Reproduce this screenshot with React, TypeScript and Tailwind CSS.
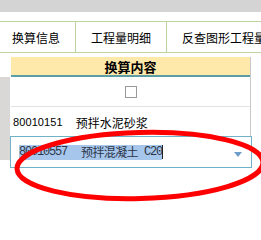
const CJK = "font-['Noto_Sans_CJK_SC',sans-serif]";

function Tab({ label, last }: { label: string; last?: boolean }) {
  return (
    <div
      className={`flex items-center px-[15px] pt-[2px] text-[12px] text-black whitespace-nowrap ${
        last ? "" : "border-r border-[#bcd5a0]"
      }`}
    >
      {label}
    </div>
  );
}

export default function App() {
  return (
    <div className={`relative w-[261px] h-[240px] overflow-hidden bg-white ${CJK}`}>
      {/* window chrome */}
      <div className="h-[12px] bg-[#d4d4d4]" />
      <div className="h-[9px]" />

      {/* tabs */}
      <div className="flex h-[32px] -ml-[3px] border-y border-[#bcd5a0]">
        <Tab label="换算信息" />
        <Tab label="工程量明细" />
        <Tab label="反查图形工程量" last />
      </div>
      <div className="h-[4px]" />

      {/* grid */}
      <div className="flex">
        <div className="w-[10px] flex flex-col">
          <div className="h-[20px]" />
          <div className="h-[83px] bg-[#d9d8d6]" />
        </div>
        <div className="w-[242px] flex flex-col">
          <div className="mx-px w-[240px] border-r border-[#c8c8c8]">
            <div className="h-[18px] bg-[#fee9ab] flex items-center justify-center text-[13px] font-bold text-black leading-none">
              换算内容
            </div>
            <div className="h-[2px] bg-[#5b9ea6]" />
            <div className="h-[30px] border-b border-[#e2e2e2] flex items-center justify-center">
              <div className="w-[12px] h-[12px] border border-[#9a9a9a] bg-white" />
            </div>
            <div className="h-[29px] flex items-center pl-[2px] pt-[2px] text-[12px] text-black">
              <span className="font-['Liberation_Sans',sans-serif] text-[11px] tracking-[0.1px]">80010151</span>
              <span className="ml-[13px]">预拌水泥砂浆</span>
            </div>
          </div>
          <div className="h-[32px] border border-[#72b2c9] flex items-center pl-[8px] pr-[9px]">
            <span className="flex items-center h-[15px] bg-[#a6c6ec] text-[12px] text-[#2b3548] leading-none whitespace-nowrap">
              <span className="font-['Liberation_Mono',monospace] tracking-[-1.2px]">80010557</span>
              <span className="ml-[14px] tracking-[-0.6px]">预拌混凝土</span>
              <span className="ml-[6px] font-['Liberation_Mono',monospace] tracking-[-1.2px]">C20</span>
            </span>
            <span className="w-px h-[14px] bg-[#222]" />
            <span className="ml-auto mt-[4px] w-0 h-0 border-x-[4px] border-x-transparent border-t-[5px] border-t-[#6d9ec9]" />
          </div>
        </div>
      </div>

      {/* red annotation */}
      <svg className="absolute inset-0" width="261" height="240" viewBox="0 0 261 240">
        <ellipse
          cx="140"
          cy="165.5"
          rx="123"
          ry="33"
          fill="none"
          stroke="#ff0000"
          strokeWidth="5"
          transform="rotate(-1.5 140 165.5)"
        />
      </svg>
    </div>
  );
}
